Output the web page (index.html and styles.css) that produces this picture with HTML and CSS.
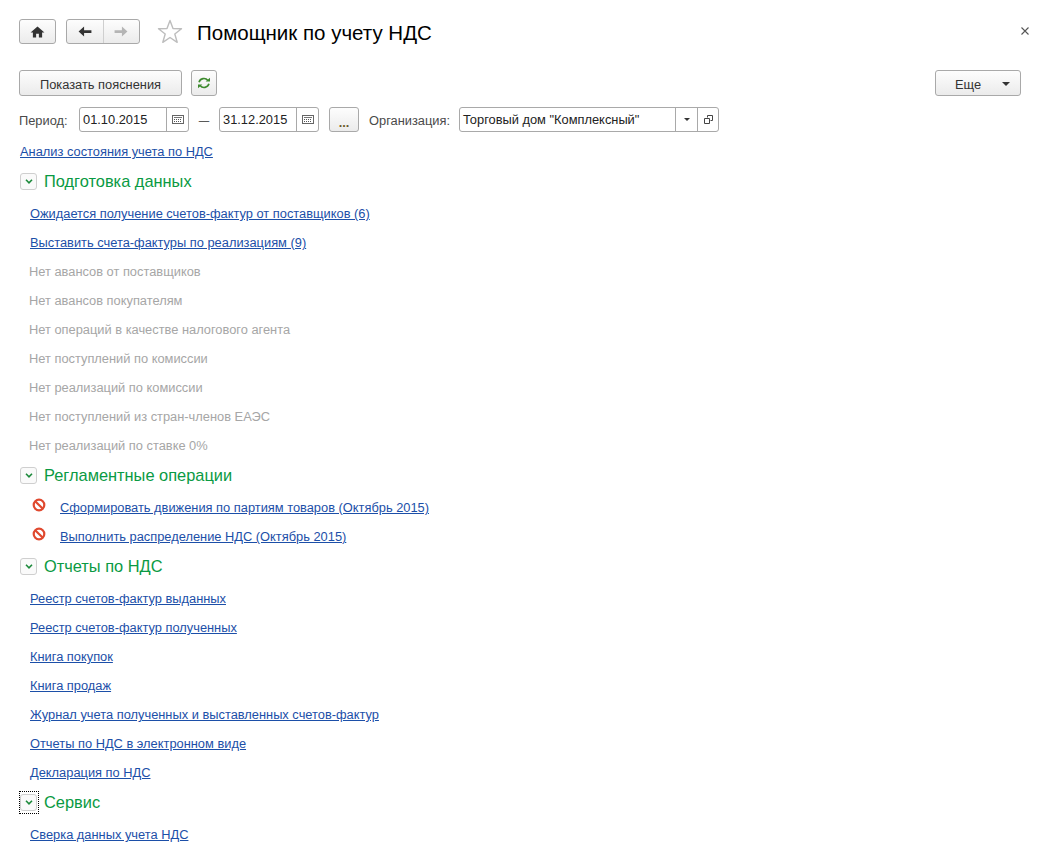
FILE: index.html
```html
<!DOCTYPE html>
<html lang="ru">
<head>
<meta charset="utf-8">
<title>Помощник по учету НДС</title>
<link rel="stylesheet" href="styles.css">
</head>
<body>
<div class="page">
  <header class="head">
    <button class="btn home"><svg width="15" height="12" viewBox="0 0 16 13"><path d="M8 0.5 L15.5 7 H13 V12.5 H9.5 V8.500 H6.5 V12.5 H3 V7 H0.5 Z" fill="#333"/></svg></button>
    <div class="btn nav">
      <span class="nav-cell"><svg width="14" height="11" viewBox="0 0 15 12"><path d="M0.5 6 L6.5 0.5 V4.5 H14.5 V7.5 H6.5 V11.5 Z" fill="#333"/></svg></span>
      <span class="nav-cell nav-next"><svg width="14" height="11" viewBox="0 0 15 12"><path d="M14.5 6 L8.5 0.5 V4.5 H0.5 V7.5 H8.5 V11.5 Z" fill="#b5b5b5"/></svg></span>
    </div>
    <svg class="star" width="26" height="25" viewBox="0 0 26 25"><path d="M13 1.5 L16 9.5 L24.5 9.8 L17.8 15 L20.2 23.3 L13 18.5 L5.8 23.3 L8.2 15 L1.5 9.8 L10 9.5 Z" fill="#fff" stroke="#bdbdbd" stroke-width="1.4" stroke-linejoin="round"/></svg>
    <h1 class="title">Помощник по учету НДС</h1>
    <svg class="close" width="8" height="8" viewBox="0 0 8 8"><path d="M0.5 0.5 L7.5 7.5 M7.5 0.5 L0.5 7.5" stroke="#555" stroke-width="1.1"/></svg>
  </header>

  <div class="toolbar">
    <button class="btn explain">Показать пояснения</button>
    <button class="btn refresh"><svg width="14" height="12" viewBox="0 0 16 14"><path d="M2.2 6 A6 6 0 0 1 12.6 4" fill="none" stroke="#3d8a2e" stroke-width="1.9"/><path d="M10 5.2 H15 V1 Z" fill="#3d8a2e"/><path d="M13.8 8 A6 6 0 0 1 3.4 10" fill="none" stroke="#3d8a2e" stroke-width="1.9"/><path d="M6 8.8 H1 V13 Z" fill="#3d8a2e"/></svg></button>
    <button class="btn more">Еще<i class="caret more-caret"></i></button>
  </div>

  <div class="filters">
    <span class="label period-label">Период:</span>
    <div class="field date">
      <span class="value">01.10.2015</span>
      <span class="cell cal"><svg width="12" height="9" viewBox="0 0 12 9"><rect x="0.5" y="0.5" width="11" height="8" fill="#fff" stroke="#666"/><path d="M2 2.5h8" stroke="#777"/><path d="M2 4.500h1M4 4.500h1M6 4.500h1M8 4.500h1M2 6.500h1M4 6.500h1M6 6.500h1M8 6.500h1" stroke="#555"/></svg></span>
    </div>
    <span class="dash">—</span>
    <div class="field date date-end">
      <span class="value">31.12.2015</span>
      <span class="cell cal"><svg width="12" height="9" viewBox="0 0 12 9"><rect x="0.5" y="0.5" width="11" height="8" fill="#fff" stroke="#666"/><path d="M2 2.5h8" stroke="#777"/><path d="M2 4.500h1M4 4.500h1M6 4.500h1M8 4.500h1M2 6.500h1M4 6.500h1M6 6.500h1M8 6.500h1" stroke="#555"/></svg></span>
    </div>
    <button class="btn dots">...</button>
    <span class="label org-label">Организация:</span>
    <div class="field org">
      <span class="value">Торговый дом "Комплексный"</span>
      <span class="cell drop"><i class="caret small-caret"></i></span>
      <span class="cell open"><svg width="9" height="9" viewBox="0 0 9 9"><path d="M3.500 2.500V0.500H8.500V5.500H6.500M0.500 3.500H5.500V8.500H0.500Z" fill="none" stroke="#444"/></svg></span>
    </div>
  </div>

  <a class="link analysis" href="#">Анализ состояния учета по НДС</a>

  <section class="group">
    <div class="group-head"><span class="toggle"><svg width="8" height="5" viewBox="0 0 8 5"><path d="M1 0.800 L4 3.800 L7 0.800" fill="none" stroke="#1d8a3c" stroke-width="1.600"/></svg></span><h2 class="group-title">Подготовка данных</h2></div>
    <ul class="items">
      <li class="item"><a class="link" href="#">Ожидается получение счетов-фактур от поставщиков (6)</a></li>
      <li class="item"><a class="link" href="#">Выставить счета-фактуры по реализациям (9)</a></li>
      <li class="item muted">Нет авансов от поставщиков</li>
      <li class="item muted">Нет авансов покупателям</li>
      <li class="item muted">Нет операций в качестве налогового агента</li>
      <li class="item muted">Нет поступлений по комиссии</li>
      <li class="item muted">Нет реализаций по комиссии</li>
      <li class="item muted">Нет поступлений из стран-членов ЕАЭС</li>
      <li class="item muted">Нет реализаций по ставке 0%</li>
    </ul>
  </section>

  <section class="group">
    <div class="group-head"><span class="toggle"><svg width="8" height="5" viewBox="0 0 8 5"><path d="M1 0.800 L4 3.800 L7 0.800" fill="none" stroke="#1d8a3c" stroke-width="1.600"/></svg></span><h2 class="group-title">Регламентные операции</h2></div>
    <ul class="items">
      <li class="item warn"><svg class="ban" width="14" height="14" viewBox="0 0 14 14"><circle cx="7" cy="7" r="5.300" fill="#fff" stroke="#e0492f" stroke-width="2.200"/><path d="M3.200 3.200 L10.800 10.800" stroke="#e0492f" stroke-width="2.200"/></svg><a class="link" href="#">Сформировать движения по партиям товаров (Октябрь 2015)</a></li>
      <li class="item warn"><svg class="ban" width="14" height="14" viewBox="0 0 14 14"><circle cx="7" cy="7" r="5.300" fill="#fff" stroke="#e0492f" stroke-width="2.200"/><path d="M3.200 3.200 L10.800 10.800" stroke="#e0492f" stroke-width="2.200"/></svg><a class="link" href="#">Выполнить распределение НДС (Октябрь 2015)</a></li>
    </ul>
  </section>

  <section class="group">
    <div class="group-head"><span class="toggle"><svg width="8" height="5" viewBox="0 0 8 5"><path d="M1 0.800 L4 3.800 L7 0.800" fill="none" stroke="#1d8a3c" stroke-width="1.600"/></svg></span><h2 class="group-title">Отчеты по НДС</h2></div>
    <ul class="items">
      <li class="item"><a class="link" href="#">Реестр счетов-фактур выданных</a></li>
      <li class="item"><a class="link" href="#">Реестр счетов-фактур полученных</a></li>
      <li class="item"><a class="link" href="#">Книга покупок</a></li>
      <li class="item"><a class="link" href="#">Книга продаж</a></li>
      <li class="item"><a class="link" href="#">Журнал учета полученных и выставленных счетов-фактур</a></li>
      <li class="item"><a class="link" href="#">Отчеты по НДС в электронном виде</a></li>
      <li class="item"><a class="link" href="#">Декларация по НДС</a></li>
    </ul>
  </section>

  <section class="group">
    <div class="group-head"><span class="toggle focused"><svg width="8" height="5" viewBox="0 0 8 5"><path d="M1 0.800 L4 3.800 L7 0.800" fill="none" stroke="#1d8a3c" stroke-width="1.600"/></svg></span><h2 class="group-title">Сервис</h2></div>
    <ul class="items">
      <li class="item"><a class="link" href="#">Сверка данных учета НДС</a></li>
    </ul>
  </section>
</div>
</body>
</html>
```
FILE: styles.css
```css
* { box-sizing: border-box; }
html, body { margin: 0; padding: 0; background: #fff; }
body { font-family: "Liberation Sans", Arial, sans-serif; font-size: 12.85px; color: #4a4a4a; }
.page { padding: 19px 19px 0; height: 861px; overflow: hidden; }
.head { display: flex; align-items: center; height: 25px; position: relative; }
.btn {
  display: inline-flex; align-items: center; justify-content: center;
  font: inherit; color: #333; padding: 0;
  border: 1px solid #a9a9a9; border-radius: 3px;
  background: linear-gradient(#fdfdfd, #ebebeb);
}
.home { width: 37px; height: 25px; }
.nav { width: 74px; height: 25px; margin-left: 10px; }
.nav-cell { flex: 1; height: 100%; display: flex; align-items: center; justify-content: center; }
.nav-next { border-left: 1px solid #cfcfcf; }
.star { margin-left: 17px; }
.title { margin: 0 0 0 14px; padding-top: 2px; font-size: 20.5px; font-weight: 400; color: #000; line-height: 25px; }
.close { position: absolute; left: 1002px; top: 8px; }
.toolbar { display: flex; margin-top: 26px; height: 26px; }
.explain { width: 163px; height: 26px; padding-top: 2px; }
.refresh { width: 26px; height: 26px; margin-left: 9px; }
.more { width: 86px; height: 26px; margin-left: auto; margin-right: 7px; position: relative; padding: 2px 20px 0 0; }
.caret { display: block; width: 0; height: 0; border-style: solid; border-color: #333 transparent transparent; }
.more-caret { position: absolute; right: 10px; top: 11px; border-width: 4px 4px 0; }
.small-caret { border-width: 3px 3px 0; }
.filters { display: flex; align-items: center; margin-top: 11px; height: 25px; }
.label { color: #4a4a4a; padding-top: 1px; }
.period-label { width: 60px; }
.field { display: flex; height: 25px; border: 1px solid #a9a9a9; border-radius: 3px; background: #fff; align-items: stretch; }
.value { flex: 1; padding-left: 3px; line-height: 23px; color: #222; white-space: nowrap; }
.cell { display: flex; align-items: center; justify-content: center; border-left: 1px solid #a9a9a9; }
.date { width: 110px; }
.date-end { width: 100px; }
.cal { width: 22px; }
.dash { width: 30px; text-align: center; color: #333; font-size: 10.5px; }
.dots { width: 30px; height: 25px; margin-left: 10px; padding-top: 6px; font-weight: 700; color: #6b5a2a; }
.org-label { width: 90px; margin-left: 10px; }
.org { width: 260px; }
.drop { width: 22px; }
.open { width: 21px; }
.link { color: #1c4fa8; text-decoration: underline; }
.analysis { display: block; margin: 13px 0 0 1px; line-height: 14px; }
.group-head { display: flex; align-items: center; height: 20px; padding-left: 1px; }
.analysis + .group { margin-top: 12px; }
.toggle {
  width: 17px; height: 17px; display: flex; align-items: center; justify-content: center;
  border: 1px solid #cfcfcf; border-radius: 3px; background: #fafafa; position: relative;
}
.focused::after { content: ""; position: absolute; left: -2px; right: -3px; top: -4px; bottom: -4px; border: 1px dotted #000; }
.group-title { margin: 0 0 0 7px; font-size: 16.4px; font-weight: 400; color: #0a9a43; line-height: 20px; }
.items { list-style: none; margin: 0; padding: 0 0 0 11px; }
.item { height: 29px; line-height: 14px; padding-top: 9px; }
.item:first-child { height: 36px; padding-top: 16px; }
.item:last-child { height: 35px; }
.item.muted { color: #a6a6a6; margin-left: -1px; }
.item.warn { display: flex; padding-left: 2px; }
.ban { flex: none; margin-right: 14px; margin-top: -3px; }
```
